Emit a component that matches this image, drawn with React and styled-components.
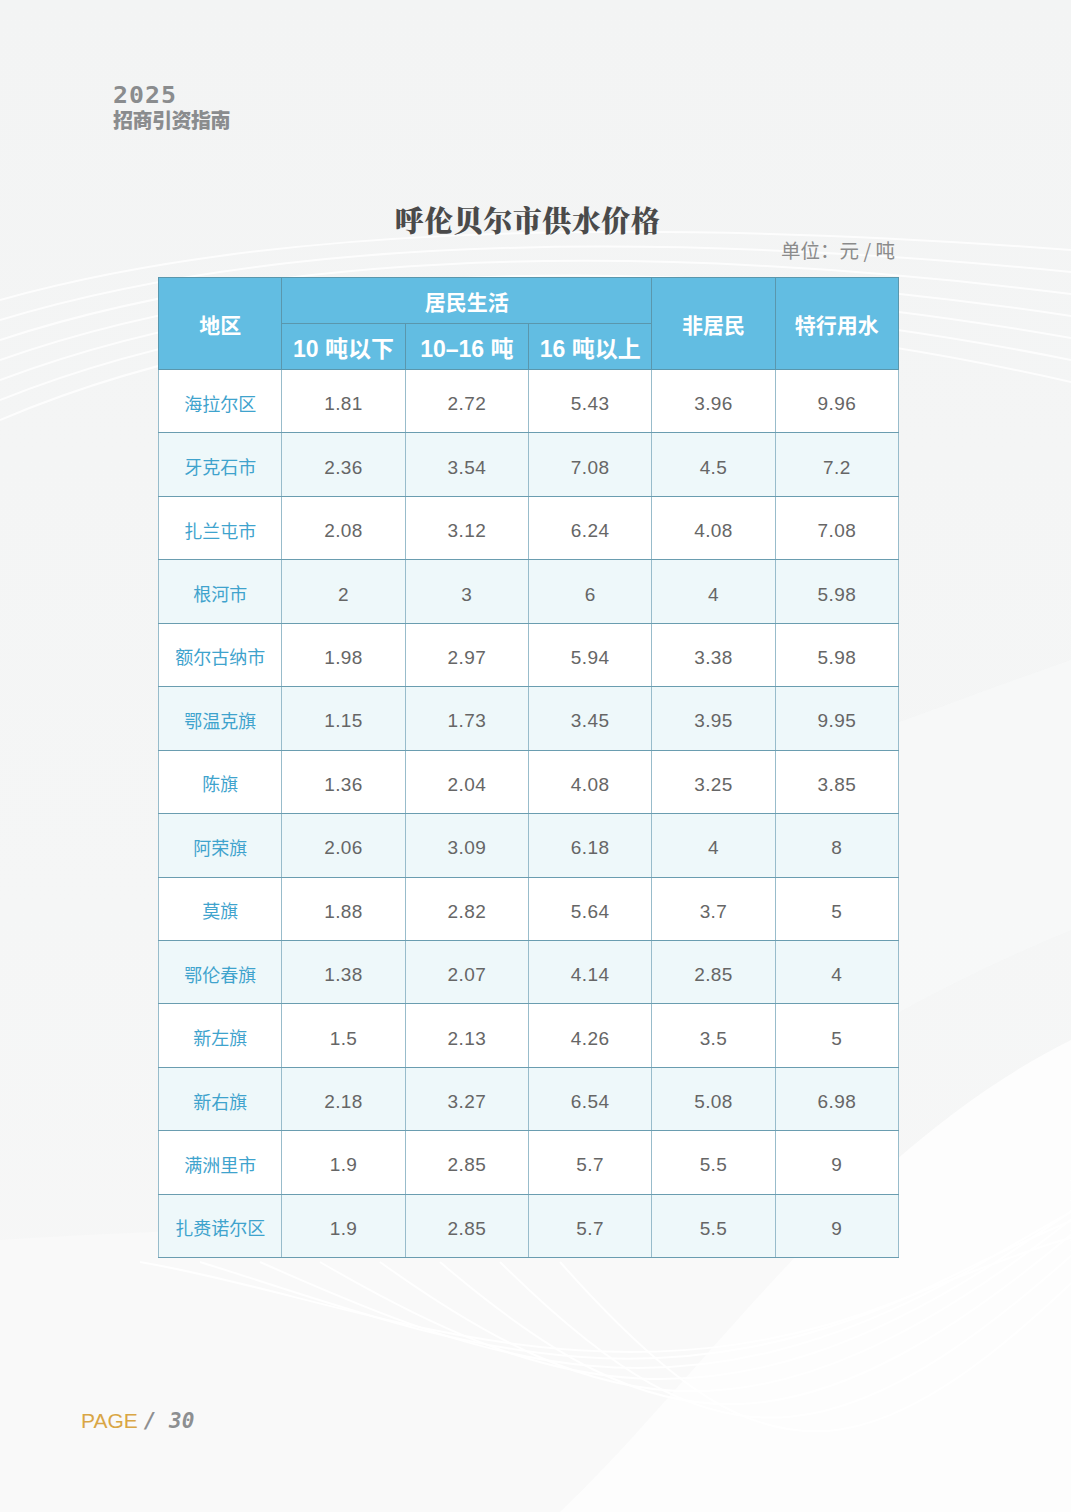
import React from 'react'
import styled, { createGlobalStyle } from 'styled-components'

const rows = [
    ['海拉尔区', '1.81', '2.72', '5.43', '3.96', '9.96'],
    ['牙克石市', '2.36', '3.54', '7.08', '4.5', '7.2'],
    ['扎兰屯市', '2.08', '3.12', '6.24', '4.08', '7.08'],
    ['根河市', '2', '3', '6', '4', '5.98'],
    ['额尔古纳市', '1.98', '2.97', '5.94', '3.38', '5.98'],
    ['鄂温克旗', '1.15', '1.73', '3.45', '3.95', '9.95'],
    ['陈旗', '1.36', '2.04', '4.08', '3.25', '3.85'],
    ['阿荣旗', '2.06', '3.09', '6.18', '4', '8'],
    ['莫旗', '1.88', '2.82', '5.64', '3.7', '5'],
    ['鄂伦春旗', '1.38', '2.07', '4.14', '2.85', '4'],
    ['新左旗', '1.5', '2.13', '4.26', '3.5', '5'],
    ['新右旗', '2.18', '3.27', '6.54', '5.08', '6.98'],
    ['满洲里市', '1.9', '2.85', '5.7', '5.5', '9'],
    ['扎赉诺尔区', '1.9', '2.85', '5.7', '5.5', '9'],
]

const GlobalStyle = createGlobalStyle`
    html, body {
        margin: 0;
        padding: 0;
        background: #f4f5f5;
    }
    body {
        font-family: 'Liberation Sans', 'Noto Sans CJK SC', sans-serif;
    }
`

const Waves = () => (
    <WaveLayer viewBox="0 0 1071 1512" preserveAspectRatio="none">
        <path d="M0 1512 L0 1240 C300 1220 600 1230 1071 1190 L1071 1512 Z" fill="#f9f9f9" />
        <path d="M560 1512 C700 1380 850 1150 1071 1040 L1071 1512 Z" fill="#fdfdfd" />
        <path d="M500 860 C700 800 900 720 1071 660 L1071 930 C900 1000 760 1090 620 1200 Z" fill="#f8f9f9" opacity="0.7" />
        {[0, 1, 2, 3, 4, 5, 6].map(i => (
            <path
                key={'t' + i}
                d={`M0 ${300 + i * 20} C250 ${230 + i * 14} 600 ${215 + i * 10} 1071 ${250 + i * 22}`}
                stroke="#ffffff"
                strokeWidth="2"
                fill="none"
                opacity="0.8"
            />
        ))}
        {[0, 1, 2, 3, 4, 5, 6, 7].map(i => (
            <path
                key={'b' + i}
                d={`M${140 + i * 60} 1262 C${360 + i * 60} ${1300 + i * 30} ${600 + i * 40} ${1420 + i * 10} ${900 + i * 40} ${1300 - i * 18} S 1071 ${1260 - i * 10} 1071 ${1250 - i * 10}`}
                stroke="#ffffff"
                strokeWidth="2"
                fill="none"
                opacity="0.9"
            />
        ))}
    </WaveLayer>
)

const App = () => (
    <Page>
        <GlobalStyle />
        <Waves />
        <Brand>
            <BrandYear>2025</BrandYear>
            <BrandName>招商引资指南</BrandName>
        </Brand>

        <Title>呼伦贝尔市供水价格</Title>
        <Unit>单位：元 / 吨</Unit>

        <Table>
            <thead>
                <tr>
                    <HeadCell rowSpan={2}>地区</HeadCell>
                    <HeadCell colSpan={3}>居民生活</HeadCell>
                    <HeadCell rowSpan={2}>非居民</HeadCell>
                    <HeadCell rowSpan={2}>特行用水</HeadCell>
                </tr>
                <tr>
                    <SubHeadCell>10 吨以下</SubHeadCell>
                    <SubHeadCell>10–16 吨</SubHeadCell>
                    <SubHeadCell>16 吨以上</SubHeadCell>
                </tr>
            </thead>
            <tbody>
                {rows.map((row, i) => (
                    <Row key={row[0]} $striped={i % 2 === 1}>
                        <RegionCell>{row[0]}</RegionCell>
                        {row.slice(1).map((v, j) => (
                            <ValueCell key={j}>{v}</ValueCell>
                        ))}
                    </Row>
                ))}
            </tbody>
        </Table>

        <Footer>
            <FooterPage>PAGE</FooterPage>
            <FooterNum>/ 30</FooterNum>
        </Footer>
    </Page>
)

const Page = styled.div`
    position: relative;
    width: 1071px;
    height: 1512px;
    overflow: hidden;
    background: linear-gradient(180deg, #f3f4f4 0%, #f5f6f6 60%, #f7f7f7 100%);
    padding: 83px 0 0;
    box-sizing: border-box;
`

const WaveLayer = styled.svg`
    position: absolute;
    inset: 0;
    width: 100%;
    height: 100%;
    pointer-events: none;
`

const Brand = styled.div`
    position: relative;
    margin-left: 113px;
    display: flex;
    flex-direction: column;
    color: #8a8c8e;
`

const BrandYear = styled.div`
    font-family: 'DejaVu Sans Mono', monospace;
    font-weight: bold;
    font-size: 23px;
    line-height: 24px;
    letter-spacing: 1px;
    transform: scaleX(1.08);
    transform-origin: left;
`

const BrandName = styled.div`
    font-family: 'Noto Sans CJK SC', sans-serif;
    font-weight: 900;
    font-size: 20px;
    line-height: 26px;
    letter-spacing: -0.5px;
`

const Title = styled.h1`
    position: relative;
    margin: 67px 0 0;
    padding-right: 16px;
    text-align: center;
    font-family: 'Noto Serif CJK SC', 'Noto Sans CJK SC', serif;
    font-weight: 900;
    font-size: 29px;
    line-height: 40px;
    color: #4a4a4a;
    letter-spacing: 0.5px;
`

const Unit = styled.div`
    position: relative;
    width: 740px;
    margin: -3px 0 0 158px;
    text-align: right;
    font-family: 'Noto Sans CJK SC', sans-serif;
    font-size: 19.5px;
    line-height: 26px;
    color: #8b8b8b;
    padding-right: 3px;
    box-sizing: border-box;
`

const Table = styled.table`
    position: relative;
    margin: 14px 0 0 158px;
    width: 741px;
    border-collapse: collapse;
    table-layout: fixed;
    border: 1.5px solid #4d8ea3;
`

const HeadCell = styled.th`
    background: #62bde2;
    color: #ffffff;
    font-family: 'Noto Sans CJK SC', sans-serif;
    font-weight: bold;
    font-size: 21px;
    height: 45px;
    padding: 0;
    border: 1px solid #5a97ad;
    text-align: center;
    vertical-align: middle;
`

const SubHeadCell = styled(HeadCell)`
    font-family: 'Liberation Sans', 'Noto Sans CJK SC', sans-serif;
    font-size: 23px;
`

const Row = styled.tr`
    background: ${p => (p.$striped ? '#eef8fa' : '#ffffff')};
    height: 63.45px;
`

const Cell = styled.td`
    padding: 6px 0 0;
    border-top: 1px solid #6a9db0;
    border-bottom: 1px solid #6a9db0;
    border-left: 1px solid #98bccb;
    border-right: 1px solid #98bccb;
    text-align: center;
`

const RegionCell = styled(Cell)`
    font-family: 'Noto Sans CJK SC', sans-serif;
    font-size: 18px;
    color: #3fa3cd;
    padding-top: 3px;
`

const ValueCell = styled(Cell)`
    font-family: 'Liberation Sans', sans-serif;
    font-size: 19px;
    letter-spacing: 0.4px;
    color: #666666;
`

const Footer = styled.div`
    position: absolute;
    left: 81px;
    top: 1409px;
    display: flex;
    align-items: baseline;
    gap: 6px;
    font-size: 21px;
`

const FooterPage = styled.span`
    font-family: 'Liberation Sans', sans-serif;
    color: #d9a645;
`

const FooterNum = styled.span`
    font-family: 'DejaVu Sans Mono', monospace;
    font-weight: bold;
    font-style: italic;
    color: #8d8f91;
`

export default App
